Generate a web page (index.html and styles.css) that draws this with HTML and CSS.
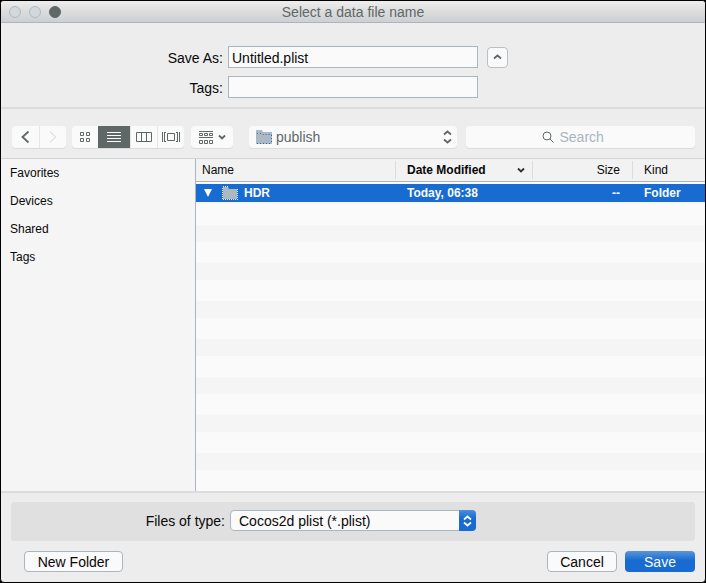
FILE: index.html
```html
<!DOCTYPE html>
<html lang="en">
<head>
<meta charset="utf-8">
<title>Select a data file name</title>
<link rel="stylesheet" href="styles.css">
</head>
<body>
<main class="window">
  <header class="titlebar">
    <div class="lights"><span class="light"></span><span class="light"></span><span class="light light-on"></span></div>
    <h1 class="title">Select a data file name</h1>
  </header>

  <form class="dialog">
    <section class="fields">
      <label class="field-label" for="save-as">Save As:</label>
      <input class="text-input" id="save-as" type="text" value="Untitled.plist">
      <button class="collapse" type="button" aria-label="Collapse">
        <svg width="9" height="6" viewBox="0 0 9 6"><path class="thick" d="M1 4.500l3.500-3 3.500 3"/></svg>
      </button>
      <label class="field-label" for="tags">Tags:</label>
      <input class="text-input" id="tags" type="text">
    </section>

    <nav class="toolbar">
      <div class="group nav-group">
        <button class="tool" type="button" aria-label="Back"><svg width="9" height="14" viewBox="0 0 9 14"><path class="thick" d="M7.500 1.500L1.500 7l6 5.500"/></svg></button>
        <button class="tool" type="button" aria-label="Forward" disabled><svg width="9" height="14" viewBox="0 0 9 14"><path d="M2 1.500L7.500 7 2 12.500"/></svg></button>
      </div>
      <div class="group view-group">
        <button class="tool" type="button" aria-label="Icons"><svg width="10" height="10" viewBox="0 0 10 10"><path d="M.5.5h3v3h-3zM6.500.5h3v3h-3zM.5 6.500h3v3h-3zM6.500 6.500h3v3h-3z"/></svg></button>
        <button class="tool tool-on" type="button" aria-label="List"><svg width="14" height="10" viewBox="0 0 14 10"><path d="M0 .5h14M0 3.500h14M0 6.500h14M0 9.500h14"/></svg></button>
        <button class="tool" type="button" aria-label="Columns"><svg width="16" height="10" viewBox="0 0 16 10"><path d="M.5.5h15v9H.5zM5.500.5v9M10.500.5v9"/></svg></button>
        <button class="tool" type="button" aria-label="Cover flow"><svg width="18" height="10" viewBox="0 0 18 10"><path d="M.5 0v10M2.500 0v10M5.500 1.500h7v7h-7zM15.500 0v10M17.500 0v10M2 .5h2M2 9.500h2M14 .5h2M14 9.500h2"/></svg></button>
      </div>
      <button class="group arrange" type="button" aria-label="Arrange">
        <svg width="15" height="13" viewBox="0 0 15 13"><path d="M0 .5h14M0 6.500h14M.5 2.500h3v2h-3zM5.500 2.500h3v2h-3zM10.500 2.500h3v2h-3zM.5 9.500h3v3h-3zM5.500 9.500h3v3h-3zM10.500 9.500h3v3h-3z"/></svg>
        <svg width="8" height="6" viewBox="0 0 8 6"><path class="thick" d="M1 1.500l3 3 3-3"/></svg>
      </button>
      <div class="location">
        <svg class="folder" width="16" height="14" viewBox="0 0 16 14"><path class="folder-body" d="M0 0h6l1 2h9v12H0z"/><path class="folder-dots" d="M1 3.500h5l1 1h9M1 13.500h15M15.500 5v8"/></svg>
        <select class="location-select" aria-label="Location"><option>publish</option></select>
        <svg class="updown" width="9" height="14" viewBox="0 0 9 14"><path class="thick" d="M1 4.500l3.500-3 3.500 3M1 9.500l3.500 3 3.500-3"/></svg>
      </div>
      <label class="search">
        <svg width="12" height="12" viewBox="0 0 12 12"><circle cx="5" cy="5" r="4"/><path d="M8 8l3.500 3.500"/></svg>
        <input class="search-input" type="search" placeholder="Search" aria-label="Search">
      </label>
    </nav>

    <section class="browser">
      <aside class="sidebar">
        <a class="place" href="#">Favorites</a>
        <a class="place" href="#">Devices</a>
        <a class="place" href="#">Shared</a>
        <a class="place" href="#">Tags</a>
      </aside>
      <div class="listing">
        <table class="files">
          <colgroup><col class="col-name"><col class="col-date"><col class="col-size"><col class="col-kind"></colgroup>
          <thead>
            <tr>
              <th>Name</th>
              <th class="sorted"><span class="sort">Date Modified <svg width="8" height="6" viewBox="0 0 8 6"><path class="thick" d="M1 1.500l3 3 3-3"/></svg></span></th>
              <th class="size">Size</th>
              <th>Kind</th>
            </tr>
          </thead>
          <tbody>
            <tr>
              <td><span class="file"><svg width="8" height="8" viewBox="0 0 8 8"><path class="triangle" d="M0 0h8L4 8z"/></svg><svg class="folder" width="16" height="14" viewBox="0 0 16 14"><path class="folder-body" d="M1 1h5l1 2h8v10H1z"/><path class="folder-edge" d="M1 .5h5M.5 2v11M1 13.500h15M15.500 3v10"/></svg>HDR</span></td>
              <td>Today, 06:38</td>
              <td class="size">--</td>
              <td>Folder</td>
            </tr>
          </tbody>
        </table>
      </div>
    </section>

    <footer class="footer">
      <div class="filter">
        <label class="field-label" for="file-type">Files of type:</label>
        <div class="type">
          <select class="type-select" id="file-type"><option>Cocos2d plist (*.plist)</option></select>
          <span class="type-cap"><svg width="9" height="12" viewBox="0 0 9 12"><path class="thick" d="M1 4.500l3.500-3 3.500 3M1 7.500l3.500 3 3.500-3"/></svg></span>
        </div>
      </div>
      <div class="actions">
        <button class="button button-wide" type="button">New Folder</button>
        <button class="button" type="button">Cancel</button>
        <button class="button button-primary" type="submit">Save</button>
      </div>
    </footer>
  </form>
</main>
</body>
</html>
```

FILE: styles.css
```css
* { box-sizing: border-box; }

body {
  margin: 0;
  background: #000;
  color: #080808;
  font: 14px/16px "Liberation Sans", Arial, sans-serif;
}

button, input, select {
  margin: 0;
  padding: 0;
  border: 0;
  color: inherit;
  font: inherit;
}

svg {
  display: block;
  flex: none;
  fill: none;
  stroke: #606767;
}

.thick { stroke-width: 1.8; }

.window {
  display: flex;
  flex-direction: column;
  min-height: 100vh;
  border: 1px solid #000;
  border-radius: 4px;
  background: #ededed;
  overflow: hidden;
}

.titlebar {
  display: grid;
  grid-template-columns: 1fr auto 1fr;
  align-items: center;
  height: 22px;
  padding: 0 8px;
  border-bottom: 1px solid #a9b5bf;
  background: linear-gradient(#eee, #dcdcdc 50%, #ccd0d3);
}

.lights { display: flex; gap: 8px; }

.light {
  width: 12px;
  height: 12px;
  border: 1px solid #acb8c2;
  border-radius: 50%;
  background: #d4d8da;
}

.light-on { border-color: #606767; background: #606767; }

.title {
  margin: 0;
  color: #606767;
  font-size: 14px;
  font-weight: normal;
}

.dialog { display: flex; flex: 1; flex-direction: column; }

.fields {
  display: grid;
  grid-template-columns: 1fr 250px 1fr;
  gap: 8px 5px;
  align-items: center;
  padding: 23px 0 9px;
  border-bottom: 2px solid #dcdcdc;
}

.field-label { justify-self: end; }
.fields .field-label { padding-top: 2px; }

.text-input {
  height: 22px;
  padding: 2px 3px 0;
  border: 1px solid #a9b5bf;
  background: #fafafa;
}

.collapse {
  display: grid;
  place-items: center;
  width: 21px;
  height: 21px;
  margin-left: 4px;
  border: 1px solid #b7c0c7;
  border-radius: 4px;
  background: #fafafa;
}

.toolbar {
  display: flex;
  align-items: center;
  padding: 17px 10px 10px 11px;
  border-bottom: 1px solid #d0d2d3;
}

.group, .location, .search {
  display: flex;
  align-items: center;
  height: 22px;
  border-radius: 4px;
  background: #fafafa;
  box-shadow: 0 1px #dcdcdc;
}

.tool {
  display: grid;
  flex: 1;
  place-items: center;
  height: 22px;
  background: none;
}

.tool + .tool { border-left: 1px solid #e6e6e6; }
.tool:disabled svg { stroke: #d0d0d0; }
.tool.tool-on { flex: 0 0 32px; border: 0; background: #606767; }
.tool-on svg { stroke: #fafafa; }
.nav-group { width: 54px; }
.view-group { width: 112px; margin-left: 6px; }

.arrange {
  justify-content: center;
  gap: 4px;
  width: 42px;
  margin-left: 7px;
}

.location {
  flex: none;
  display: grid;
  grid-template-columns: 27px 1fr 14px;
  width: 208px;
  margin-left: 16px;
  color: #606767;
}

.location .folder { grid-area: 1 / 1; margin-left: 7px; }

.location-select {
  grid-area: 1 / 1 / 2 / 4;
  height: 22px;
  padding: 0 16px 0 27px;
  appearance: none;
  background: none;
}

.updown { grid-area: 1 / 3; pointer-events: none; }

.folder-body { fill: #acb8c2; stroke: none; }
.folder-dots { stroke: #1b6dd3; stroke-dasharray: 1 2; }
.folder-edge { stroke: #dfe9ef; stroke-dasharray: 1 1; }

.search {
  flex: 1;
  justify-content: center;
  gap: 6px;
  margin-left: 9px;
}

.search-input {
  width: 60px;
  background: none;
  outline: 0;
}

.search-input::placeholder { color: #a9b5bf; }

.browser { display: flex; flex: 1; }

.sidebar {
  display: flex;
  flex: 0 0 195px;
  flex-direction: column;
  gap: 12px;
  padding: 6px 9px;
  border-right: 1px solid #a9b5bf;
  background: #f5f5f5;
  font-size: 12px;
}

.place { color: inherit; text-decoration: none; }

/* Alternating empty rows below the listed files */
.listing {
  flex: 1;
  background: linear-gradient(#fafafa 21px, #f5f5f5 21px) 0 7px / 100% 38px;
}

.files {
  width: 100%;
  border-collapse: separate;
  border-spacing: 0;
  table-layout: fixed;
  font-size: 12px;
}

.col-name { width: 200px; }
.col-date { width: 137px; }
.col-size { width: 100px; }

.files th {
  height: 23px;
  padding: 0 6px;
  border-bottom: 1px solid #a9b5bf;
  background: linear-gradient(#dcdcdc, #dcdcdc) right 2px / 1px 18px no-repeat #f2f2f2;
  font-weight: normal;
  text-align: left;
}

.files th:last-child { background: #f2f2f2; }
.files th.sorted { font-weight: bold; }
.files tbody::before { content: ""; display: block; height: 2px; background: #fafafa; }

.files td {
  height: 18px;
  padding: 0 8px;
  background: #186bd1;
  color: #fafafa;
  font-weight: bold;
}

.files th:nth-child(n + 2), .files td:nth-child(n + 2) { padding: 0 11px; }
.files th.sorted.sorted { padding-right: 8px; }
.files .size.size { padding: 0 13px; text-align: right; }

.sort { display: flex; align-items: center; justify-content: space-between; }
.sort svg { stroke: #303434; }
.file { display: flex; align-items: center; gap: 6px; }
.file .folder { margin-left: 4px; }
.triangle { fill: #fafafa; stroke: none; }

.footer {
  padding: 9px 10px 10px;
  border-top: 2px solid #dcdcdc;
}

.filter {
  display: grid;
  grid-template-columns: 1fr 246px 1fr;
  gap: 5px;
  align-items: center;
  padding: 8px 0 10px;
  border-radius: 3px;
  background: #e0e0e0;
}

.type { display: grid; grid-template-columns: 1fr 17px; }

.type-select {
  grid-area: 1 / 1 / 2 / 3;
  height: 21px;
  padding: 0 20px 0 8px;
  border: 1px solid #a9b5bf;
  border-radius: 4px;
  appearance: none;
  background: #fafafa;
}

.type-cap {
  display: grid;
  grid-area: 1 / 2;
  place-items: center;
  border-radius: 0 4px 4px 0;
  background: linear-gradient(#4c8edb, #186bd1 40%);
  pointer-events: none;
}

.type-cap svg { stroke: #fafafa; }

.actions {
  display: flex;
  gap: 8px;
  padding: 10px 0 0 13px;
}

.button {
  width: 70px;
  height: 21px;
  border: 1px solid #a9b5bf;
  border-radius: 4px;
  background: #fafafa;
}

.button-wide { width: 99px; margin-right: auto; }

.button-primary {
  border: 0;
  background: linear-gradient(#5a95da, #186bd1 45%);
  color: #fafafa;
}
```
